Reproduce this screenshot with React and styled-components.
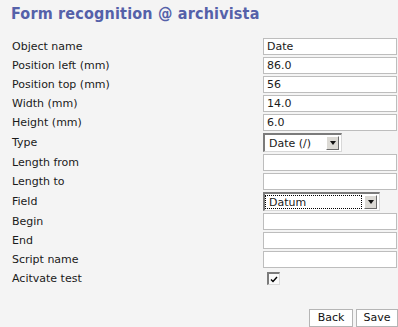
import React from 'react';
import styled, { createGlobalStyle } from 'styled-components';

const GlobalStyle = createGlobalStyle`
  html, body {
    margin: 0;
    padding: 0;
    background: #f4f4f4;
  }
  body {
    font-family: "DejaVu Sans", Verdana, sans-serif;
    font-size: 11px;
    color: #1a1a1a;
  }
`;

const Page = styled.div`
  width: 398px;
  height: 327px;
  overflow: hidden;
  background: #f4f4f4;
`;

const Title = styled.h1`
  margin: 0;
  padding: 4px 0 0 11px;
  height: 33px;
  box-sizing: border-box;
  font-family: "DejaVu Sans Condensed", "DejaVu Sans", sans-serif;
  font-stretch: condensed;
  font-weight: bold;
  font-size: 16px;
  letter-spacing: 0.18px;
  line-height: 20px;
  color: #5561a9;
`;

const Form = styled.div`
  display: grid;
  grid-template-columns: 251px 134px;
  row-gap: 2px;
  padding: 5px 0 0 12px;
`;

const Label = styled.div`
  display: flex;
  align-items: center;
  height: ${p => p.$h || 17}px;
  white-space: nowrap;
`;

const TextBox = styled.div`
  box-sizing: border-box;
  height: 17px;
  width: 134px;
  background: #fff;
  border: 1px solid #bdbdbd;
  padding: 0 3px;
  line-height: 15px;
  white-space: nowrap;
`;

const Select = styled.div`
  box-sizing: border-box;
  display: flex;
  align-items: stretch;
  height: 19px;
  width: ${p => p.$w}px;
  background: #fff;
  border-top: 2px solid #7b7b7b;
  border-left: 2px solid #7b7b7b;
  border-right: 1px solid #d8d8d8;
  border-bottom: 1px solid #d8d8d8;
`;

const SelectText = styled.div`
  flex: 1;
  display: flex;
  align-items: center;
  padding: 0 3px;
  margin: 1px 2px 1px 0;
  border: 1px ${p => (p.$focus ? 'dotted #000' : 'solid transparent')};
  white-space: nowrap;
`;

const SelectButton = styled.div`
  box-sizing: border-box;
  width: 13px;
  margin: 1px 2px 1px 0;
  background: #dcdad5;
  border-top: 1px solid #fff;
  border-left: 1px solid #fff;
  border-right: 1px solid #6a6a6a;
  border-bottom: 1px solid #6a6a6a;
  display: flex;
  align-items: center;
  justify-content: center;
`;

const Arrow = styled.div`
  width: 0;
  height: 0;
  border-left: 3.5px solid transparent;
  border-right: 3.5px solid transparent;
  border-top: 4px solid #111;
`;

const CheckCell = styled.div`
  height: 17px;
  padding: 2px 0 0 4px;
  box-sizing: border-box;
`;

const CheckBox = styled.div`
  box-sizing: border-box;
  width: 13px;
  height: 13px;
  background: #fafafa;
  border-top: 2px solid #7b7b7b;
  border-left: 2px solid #7b7b7b;
  border-right: 1px solid #dadada;
  border-bottom: 1px solid #dadada;
  display: flex;
  align-items: center;
  justify-content: center;
`;

const Actions = styled.div`
  display: flex;
  justify-content: flex-end;
  gap: 3px;
  padding: 22px 0 0 0;
`;

const Button = styled.div`
  box-sizing: border-box;
  height: 18px;
  width: ${p => p.$w}px;
  text-align: center;
  background: #fff;
  border: 1px solid #b5b5b5;
  line-height: 16px;
  font-size: 11px;
  color: #111;
`;

const rows = [
  { label: 'Object name', value: 'Date' },
  { label: 'Position left (mm)', value: '86.0' },
  { label: 'Position top (mm)', value: '56' },
  { label: 'Width (mm)', value: '14.0' },
  { label: 'Height (mm)', value: '6.0' },
  { label: 'Type', select: 'Date (/)', width: 79 },
  { label: 'Length from', value: '' },
  { label: 'Length to', value: '' },
  { label: 'Field', select: 'Datum', width: 117, focus: true },
  { label: 'Begin', value: '' },
  { label: 'End', value: '' },
  { label: 'Script name', value: '' },
];

export default function App() {
  return (
    <Page>
      <GlobalStyle />
      <Title>Form recognition @ archivista</Title>
      <Form>
        {rows.map(r => (
          <React.Fragment key={r.label}>
            <Label $h={r.select ? 19 : 17}>{r.label}</Label>
            {r.select ? (
              <Select $w={r.width}>
                <SelectText $focus={r.focus}>{r.select}</SelectText>
                <SelectButton><Arrow /></SelectButton>
              </Select>
            ) : (
              <TextBox>{r.value}</TextBox>
            )}
          </React.Fragment>
        ))}
        <Label>Acitvate test</Label>
        <CheckCell>
          <CheckBox>
            <svg width="8" height="7" viewBox="0 0 8 7">
              <path d="M1 3.5 L3 5.5 L7 1" stroke="#000" strokeWidth="1.4" fill="none" />
            </svg>
          </CheckBox>
        </CheckCell>
      </Form>
      <Actions>
        <Button $w={44}>Back</Button>
        <Button $w={42}>Save</Button>
      </Actions>
    </Page>
  );
}
